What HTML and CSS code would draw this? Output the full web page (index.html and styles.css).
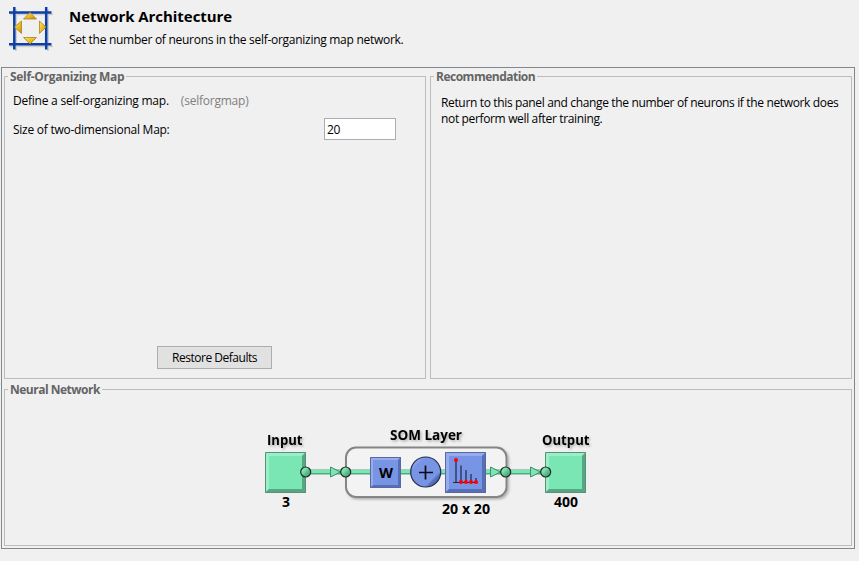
FILE: index.html
```html
<!DOCTYPE html>
<html lang="en">
<head>
<meta charset="utf-8">
<title>Network Architecture</title>
<link rel="stylesheet" href="styles.css">
</head>
<body>
<header class="header">
  <svg class="logo" width="48" height="50" viewBox="0 0 48 50">
    <defs>
      <linearGradient id="gold" x1="0" y1="0" x2="1" y2="1"><stop offset="0" stop-color="#ffe36a"/><stop offset=".55" stop-color="#e9b91c"/><stop offset="1" stop-color="#b98a08"/></linearGradient>
    </defs>
    <path d="M2 8.300H45M2 40.300H45M8 3V45M40 3V45" stroke="#cfcfcf" stroke-width="2" fill="none"/>
    <path d="M1 6.500H43.500M1 38.300H43.500M6.300 1V43.500M38.200 1V43.500" stroke="#0d40a6" stroke-width="2.500" fill="none"/>
    <g fill="url(#gold)" stroke="#a88224" stroke-width=".8">
      <path d="M22 6.500L28.500 13H15.500z"/><path d="M15.500 31.500H28.500L22 38z"/><path d="M13.500 15V27.500L6.500 21z"/><path d="M31.500 15V27.500L38 21z"/>
    </g>
  </svg>
  <div class="heading">
    <h1 class="title">Network Architecture</h1>
    <p class="subtitle">Set the number of neurons in the self-organizing map network.</p>
  </div>
</header>
<main class="frame">
  <section class="panel">
    <h2 class="panel-title">Self-Organizing Map</h2>
    <p class="define"><span>Define a self-organizing map.</span><span class="fn">(selforgmap)</span></p>
    <div class="field"><label for="size">Size of two-dimensional Map:</label><input id="size" class="input" value="20"></div>
    <button class="button" type="button">Restore Defaults</button>
  </section>
  <section class="panel">
    <h2 class="panel-title tight">Recommendation</h2>
    <p class="advice">Return to this panel and change the number of neurons if the network does<br>not perform well after training.</p>
  </section>
  <section class="panel network">
    <h2 class="panel-title tight">Neural Network</h2>
    <svg class="diagram" width="340" height="100" viewBox="255 425 340 100">
      <defs>
        <filter id="shadow" x="-20%" y="-20%" width="150%" height="150%"><feDropShadow dx="1.500" dy="1.500" stdDeviation=".8" flood-color="#000" flood-opacity=".28"/></filter>
        <linearGradient id="ball" x1="0" y1="0" x2="1" y2="1"><stop offset=".3" stop-color="#7ce6b4"/><stop offset=".7" stop-color="#58aa84"/></linearGradient>
        <linearGradient id="blueball" x1="0" y1="0" x2="1" y2="1"><stop offset=".1" stop-color="#9db1f2"/><stop offset=".25" stop-color="#7894e4"/><stop offset=".72" stop-color="#7894e4"/><stop offset=".78" stop-color="#536cb4"/></linearGradient>
        <g id="neuron">
          <path d="M0 0H41V41H0z" fill="#7ae6b3"/>
          <path d="M0 0H41L37 4H4V37L0 41z" fill="#9aefc8"/>
          <path d="M41 0V41H0L4 37H37V4z" fill="#55a881"/>
          <path d="M.5 .5H40.500V40.500H.5z" fill="none" stroke="#5a8f78"/>
        </g>
      </defs>
      <rect x="346" y="447.500" width="160.500" height="49.500" rx="10" fill="#f3f3f3" stroke="#858585" stroke-width="2" filter="url(#shadow)"/>
      <path d="M306 472H546" stroke="#56a681" stroke-width="5"/>
      <path d="M306 471.500H546" stroke="#7ae6b3" stroke-width="3"/>
      <use href="#neuron" x="265" y="452"/>
      <use href="#neuron" x="545" y="452"/>
      <g fill="#7ae6b3" stroke="#458b6c"><path d="M330.500 467V477L340.500 472z"/><path d="M490.500 467V477L500.500 472z"/><path d="M530.500 467V477L540.500 472z"/></g>
      <g fill="url(#ball)" stroke="#1c3026" stroke-width="1.200"><circle cx="305.700" cy="472" r="5"/><circle cx="345.700" cy="472" r="5"/><circle cx="505.700" cy="472" r="5"/><circle cx="545.700" cy="472" r="5"/></g>
      <g>
        <path d="M370 457H401V488H370z" fill="#7894e4"/>
        <path d="M370 457H401L398 460H373V485L370 488z" fill="#96acef"/>
        <path d="M401 457V488H370L373 485H398V460z" fill="#566fb7"/>
        <path d="M370.500 457.500H400.500V487.500H370.500z" fill="none" stroke="#5869a0"/>
        <circle cx="425.700" cy="472" r="15" fill="url(#blueball)" stroke="#202b4b" stroke-width="1.200"/>
        <path d="M419 472.500H433M425.500 465.500V479.500" stroke="#0a0d17" stroke-width="1.700"/>
        <path d="M445 452H486V493H445z" fill="#7894e4"/>
        <path d="M445 452H486L482 456H449V489L445 493z" fill="#96acef"/>
        <path d="M486 452V493H445L449 489H482V456z" fill="#566fb7"/>
        <path d="M445.500 452.500H485.500V492.500H445.500z" fill="none" stroke="#5869a0"/>
        <path d="M456 460V482.500M461 465.500V482M466 470V482M471 474V482M476 478V482M453 482.500H478" fill="none" stroke="#202749" stroke-width="1.200"/>
        <g fill="#f00"><circle cx="456" cy="460" r="2"/><circle cx="461" cy="482" r="2"/><circle cx="466" cy="482" r="2"/><circle cx="471" cy="482" r="2"/><circle cx="476" cy="482" r="2"/></g>
      </g>
      <g class="labels" filter="url(#shadow)">
        <text x="267" y="445" textLength="35.500" lengthAdjust="spacingAndGlyphs">Input</text>
        <text x="390" y="440" textLength="72" lengthAdjust="spacingAndGlyphs">SOM Layer</text>
        <text x="542" y="445" textLength="47.500" lengthAdjust="spacingAndGlyphs">Output</text>
      </g>
      <g class="labels">
        <text x="282" y="507" textLength="8" lengthAdjust="spacingAndGlyphs">3</text>
        <text x="442" y="514" textLength="48" lengthAdjust="spacingAndGlyphs">20 x 20</text>
        <text x="554" y="507" textLength="24" lengthAdjust="spacingAndGlyphs">400</text>
        <text x="379" y="478" textLength="14" lengthAdjust="spacingAndGlyphs">W</text>
      </g>
    </svg>
  </section>
</main>
</body>
</html>
```
FILE: styles.css
```css
* { box-sizing: border-box; }
body {
  margin: 0;
  background: #f0f0f0;
  color: #000;
  font: 12px/16px "Open Sans", "Noto Sans", sans-serif;
}
h1, h2, p { margin: 0; white-space: nowrap; }
.header { display: flex; height: 67px; padding: 6px 0 0 8px; }
.logo { flex: none; }
.heading { padding: 0 0 0 13px; }
.title { font-size: 15px; line-height: 20px; font-weight: 700; letter-spacing: -0.05px; }
.subtitle { margin-top: 6px; letter-spacing: -0.28px; }
.frame {
  display: grid;
  grid-template: 303px 157px / 422px 422px;
  gap: 10px 4px;
  width: 854px;
  height: 482px;
  margin-left: 1px;
  padding: 8px 2px 2px;
  border: 1px solid #828790;
}
.panel { border: 1px solid #bcbcbc; }
.network { grid-column: 1 / 3; }
.panel-title {
  width: max-content;
  height: 16px;
  margin: -8px 0 0 3px;
  padding: 0 2px;
  background: #f0f0f0;
  color: #646464;
  font-size: 12px;
  line-height: 16px;
  letter-spacing: -0.3px;
}
.tight { letter-spacing: -0.5px; }
.define { display: flex; gap: 12px; padding: 8px 0 0 8px; letter-spacing: -0.23px; }
.fn { color: #808080; }
.field { display: flex; justify-content: space-between; align-items: center; height: 22px; margin: 9px 29px 0 8px; padding-top: 0; letter-spacing: -0.26px; }
.field label { padding-top: 2px; }
.input {
  width: 72px;
  height: 22px;
  padding: 1px 2px 0;
  border: 1px solid #abadb3;
  background: #fff;
  font: inherit;
  letter-spacing: -0.3px;
}
.button {
  display: block;
  width: 115px;
  height: 23px;
  margin: 206px 0 0 152px;
  padding: 0;
  border: 1px solid #adadad;
  background: #e1e1e1;
  color: #000;
  font: inherit;
  letter-spacing: -0.48px;
  white-space: nowrap;
}
.advice { padding: 10px 0 0 10px; letter-spacing: -0.35px; }
.diagram { display: block; margin: 27px 0 0 250px; }
.labels { font: 700 14px "Open Sans", "Noto Sans", sans-serif; }
```
